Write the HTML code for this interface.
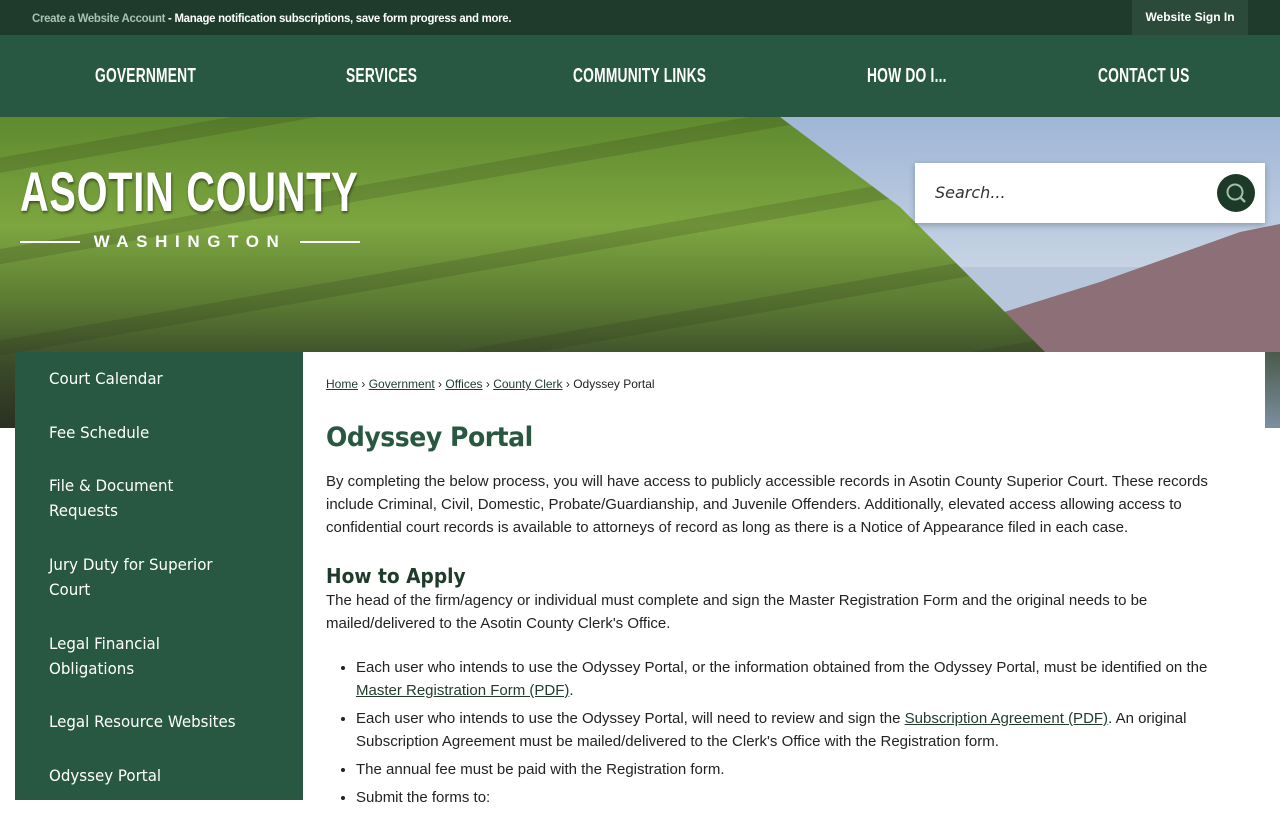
<!DOCTYPE html>
<html><head><meta charset="utf-8"><style>
*{margin:0;padding:0;box-sizing:border-box}
body{width:1280px;height:800px;overflow:hidden;font-family:"Liberation Sans",sans-serif;background:#fff;position:relative}
.top{position:absolute;left:0;top:0;width:1280px;height:35px;background:#1e3b2b;color:#fff;font-size:12px}
.top .t{position:absolute;left:32px;top:11px;letter-spacing:-0.3px;font-weight:bold;transform:scaleX(.95);transform-origin:left;white-space:nowrap}
.top .t span{color:#a9c2b2}
.top .sign{position:absolute;left:1132px;top:0;width:116px;height:35px;background:#2c4a39;text-align:center;line-height:35px;font-size:12px;font-weight:bold}
.nav{position:absolute;top:35px;left:0;width:1280px;height:82px;background:#285841}
.nav div{position:absolute;top:30px;color:#fff;font-weight:bold;font-size:20px;transform:scaleX(.69);transform-origin:left;white-space:nowrap;letter-spacing:.3px}
.hero{position:absolute;top:117px;left:0;width:1280px;height:311px;overflow:hidden;background:#b8c6dc}
.hero .sky{position:absolute;left:780px;top:0;width:500px;height:150px;background:linear-gradient(180deg,#9fb6d6,#c7d3e4)}
.hero .mt{position:absolute;left:940px;top:95px;width:400px;height:200px;background:#8d6f78;clip-path:polygon(0 60%,40% 35%,75% 10%,100% 0,100% 100%,0 100%)}
.hero .hill{position:absolute;left:0;top:0;width:1050px;height:311px;background:repeating-linear-gradient(170deg,rgba(40,45,25,0) 0 40px,rgba(40,45,25,.18) 40px 55px,rgba(40,45,25,0) 55px 90px),linear-gradient(180deg,#5f8a2e,#7da640 35%,#5b7a32 60%,#3a4a2a 80%,#2a3022);clip-path:polygon(0 0,780px 0,900px 90px,1050px 240px,1050px 311px,0 311px)}
.hero .water{position:absolute;left:0;top:235px;width:1280px;height:76px;background:linear-gradient(180deg,#4a5a4c,#7c8f9f)}
.logo{position:absolute;left:20px;top:162px;color:#fff}
.logo .a{font-size:56px;font-weight:bold;transform:scaleX(.71);transform-origin:left;letter-spacing:1px;line-height:60px;text-shadow:1px 2px 3px rgba(0,0,0,.5);white-space:nowrap}
.logo .w{position:absolute;left:0;top:70px;width:340px;font-size:17px;letter-spacing:7.6px;text-align:center;font-weight:bold}
.logo .l1,.logo .l2{position:absolute;top:79px;width:60px;height:2px;background:#fff}
.logo .l1{left:0}.logo .l2{left:280px}
.search{position:absolute;left:915px;top:163px;width:350px;height:60px;background:#fff;box-shadow:0 2px 6px rgba(0,0,0,.25)}
.search span{position:absolute;left:20px;top:20px;font-style:italic;color:#333;font-family:"DejaVu Sans",sans-serif;font-size:16px}
.search .b{position:absolute;left:302px;top:11px;width:38px;height:38px;border-radius:50%;background:#1d3a28}
.side{position:absolute;left:15px;top:352px;width:288px;height:448px;background:#285841}
.side div{position:absolute;left:34px;color:#fff;line-height:25px;font-family:"DejaVu Sans",sans-serif;font-size:16px;transform:scaleX(.94);transform-origin:left;white-space:nowrap}
.main{position:absolute;left:303px;top:352px;width:962px;height:448px;background:#fff;color:#222}
.bc{position:absolute;left:23px;top:25px;font-size:12px}
.bc u{color:#1e3b2b}
h1{position:absolute;left:23px;top:70px;font-size:27px;color:#285841;font-family:"DejaVu Sans",sans-serif;font-weight:bold;letter-spacing:-.5px;transform:scaleX(.93);transform-origin:left}
p,li{font-size:15px;line-height:23px}
.p1{position:absolute;left:23px;top:118px;width:910px}
.h2{position:absolute;left:23px;top:212px;font-size:20px;font-weight:bold;color:#1e3b2b;font-family:"DejaVu Sans",sans-serif;transform:scaleX(.93);transform-origin:left}
.p2{position:absolute;left:23px;top:237px;width:880px}
ul{position:absolute;left:53px;top:304px;width:880px}
li{margin-bottom:5px}
a{color:#1e3b2b}
</style></head><body>
<div class="top"><div class="t"><span>Create a Website Account</span> - Manage notification subscriptions, save form progress and more.</div><div class="sign">Website Sign In</div></div>
<div class="nav"><div style="left:95px">GOVERNMENT</div><div style="left:346px">SERVICES</div><div style="left:573px">COMMUNITY LINKS</div><div style="left:867px">HOW DO I...</div><div style="left:1098px">CONTACT US</div></div>
<div class="hero"><div class="sky"></div><div class="mt"></div><div class="water"></div><div class="hill"></div></div>
<div class="logo"><div class="a">ASOTIN COUNTY</div><div class="l1"></div><div class="w">WASHINGTON</div><div class="l2"></div></div>
<div class="search"><span>Search...</span><div class="b"><svg width="38" height="38" viewBox="0 0 38 38"><circle cx="18" cy="18" r="7.5" fill="none" stroke="#9fc1ac" stroke-width="2"/><line x1="23.5" y1="23.5" x2="28" y2="28" stroke="#9fc1ac" stroke-width="2.4"/></svg></div></div>
<div class="side">
<div style="top:14px">Court Calendar</div>
<div style="top:68px">Fee Schedule</div>
<div style="top:121px">File &amp; Document<br>Requests</div>
<div style="top:200px">Jury Duty for Superior<br>Court</div>
<div style="top:279px">Legal Financial<br>Obligations</div>
<div style="top:357px">Legal Resource Websites</div>
<div style="top:411px">Odyssey Portal</div>
</div>
<div class="main">
<div class="bc"><u>Home</u> › <u>Government</u> › <u>Offices</u> › <u>County Clerk</u> › Odyssey Portal</div>
<h1>Odyssey Portal</h1>
<p class="p1">By completing the below process, you will have access to publicly accessible records in Asotin County Superior Court. These records include Criminal, Civil, Domestic, Probate/Guardianship, and Juvenile Offenders. Additionally, elevated access allowing access to confidential court records is available to attorneys of record as long as there is a Notice of Appearance filed in each case.</p>
<div class="h2">How to Apply</div>
<p class="p2">The head of the firm/agency or individual must complete and sign the Master Registration Form and the original needs to be mailed/delivered to the Asotin County Clerk's Office.</p>
<ul>
<li>Each user who intends to use the Odyssey Portal, or the information obtained from the Odyssey Portal, must be identified on the <a href="#">Master Registration Form (PDF)</a>.</li>
<li>Each user who intends to use the Odyssey Portal, will need to review and sign the <a href="#">Subscription Agreement (PDF)</a>. An original Subscription Agreement must be mailed/delivered to the Clerk's Office with the Registration form.</li>
<li>The annual fee must be paid with the Registration form.</li>
<li>Submit the forms to:</li>
</ul>
</div>
</body></html>
